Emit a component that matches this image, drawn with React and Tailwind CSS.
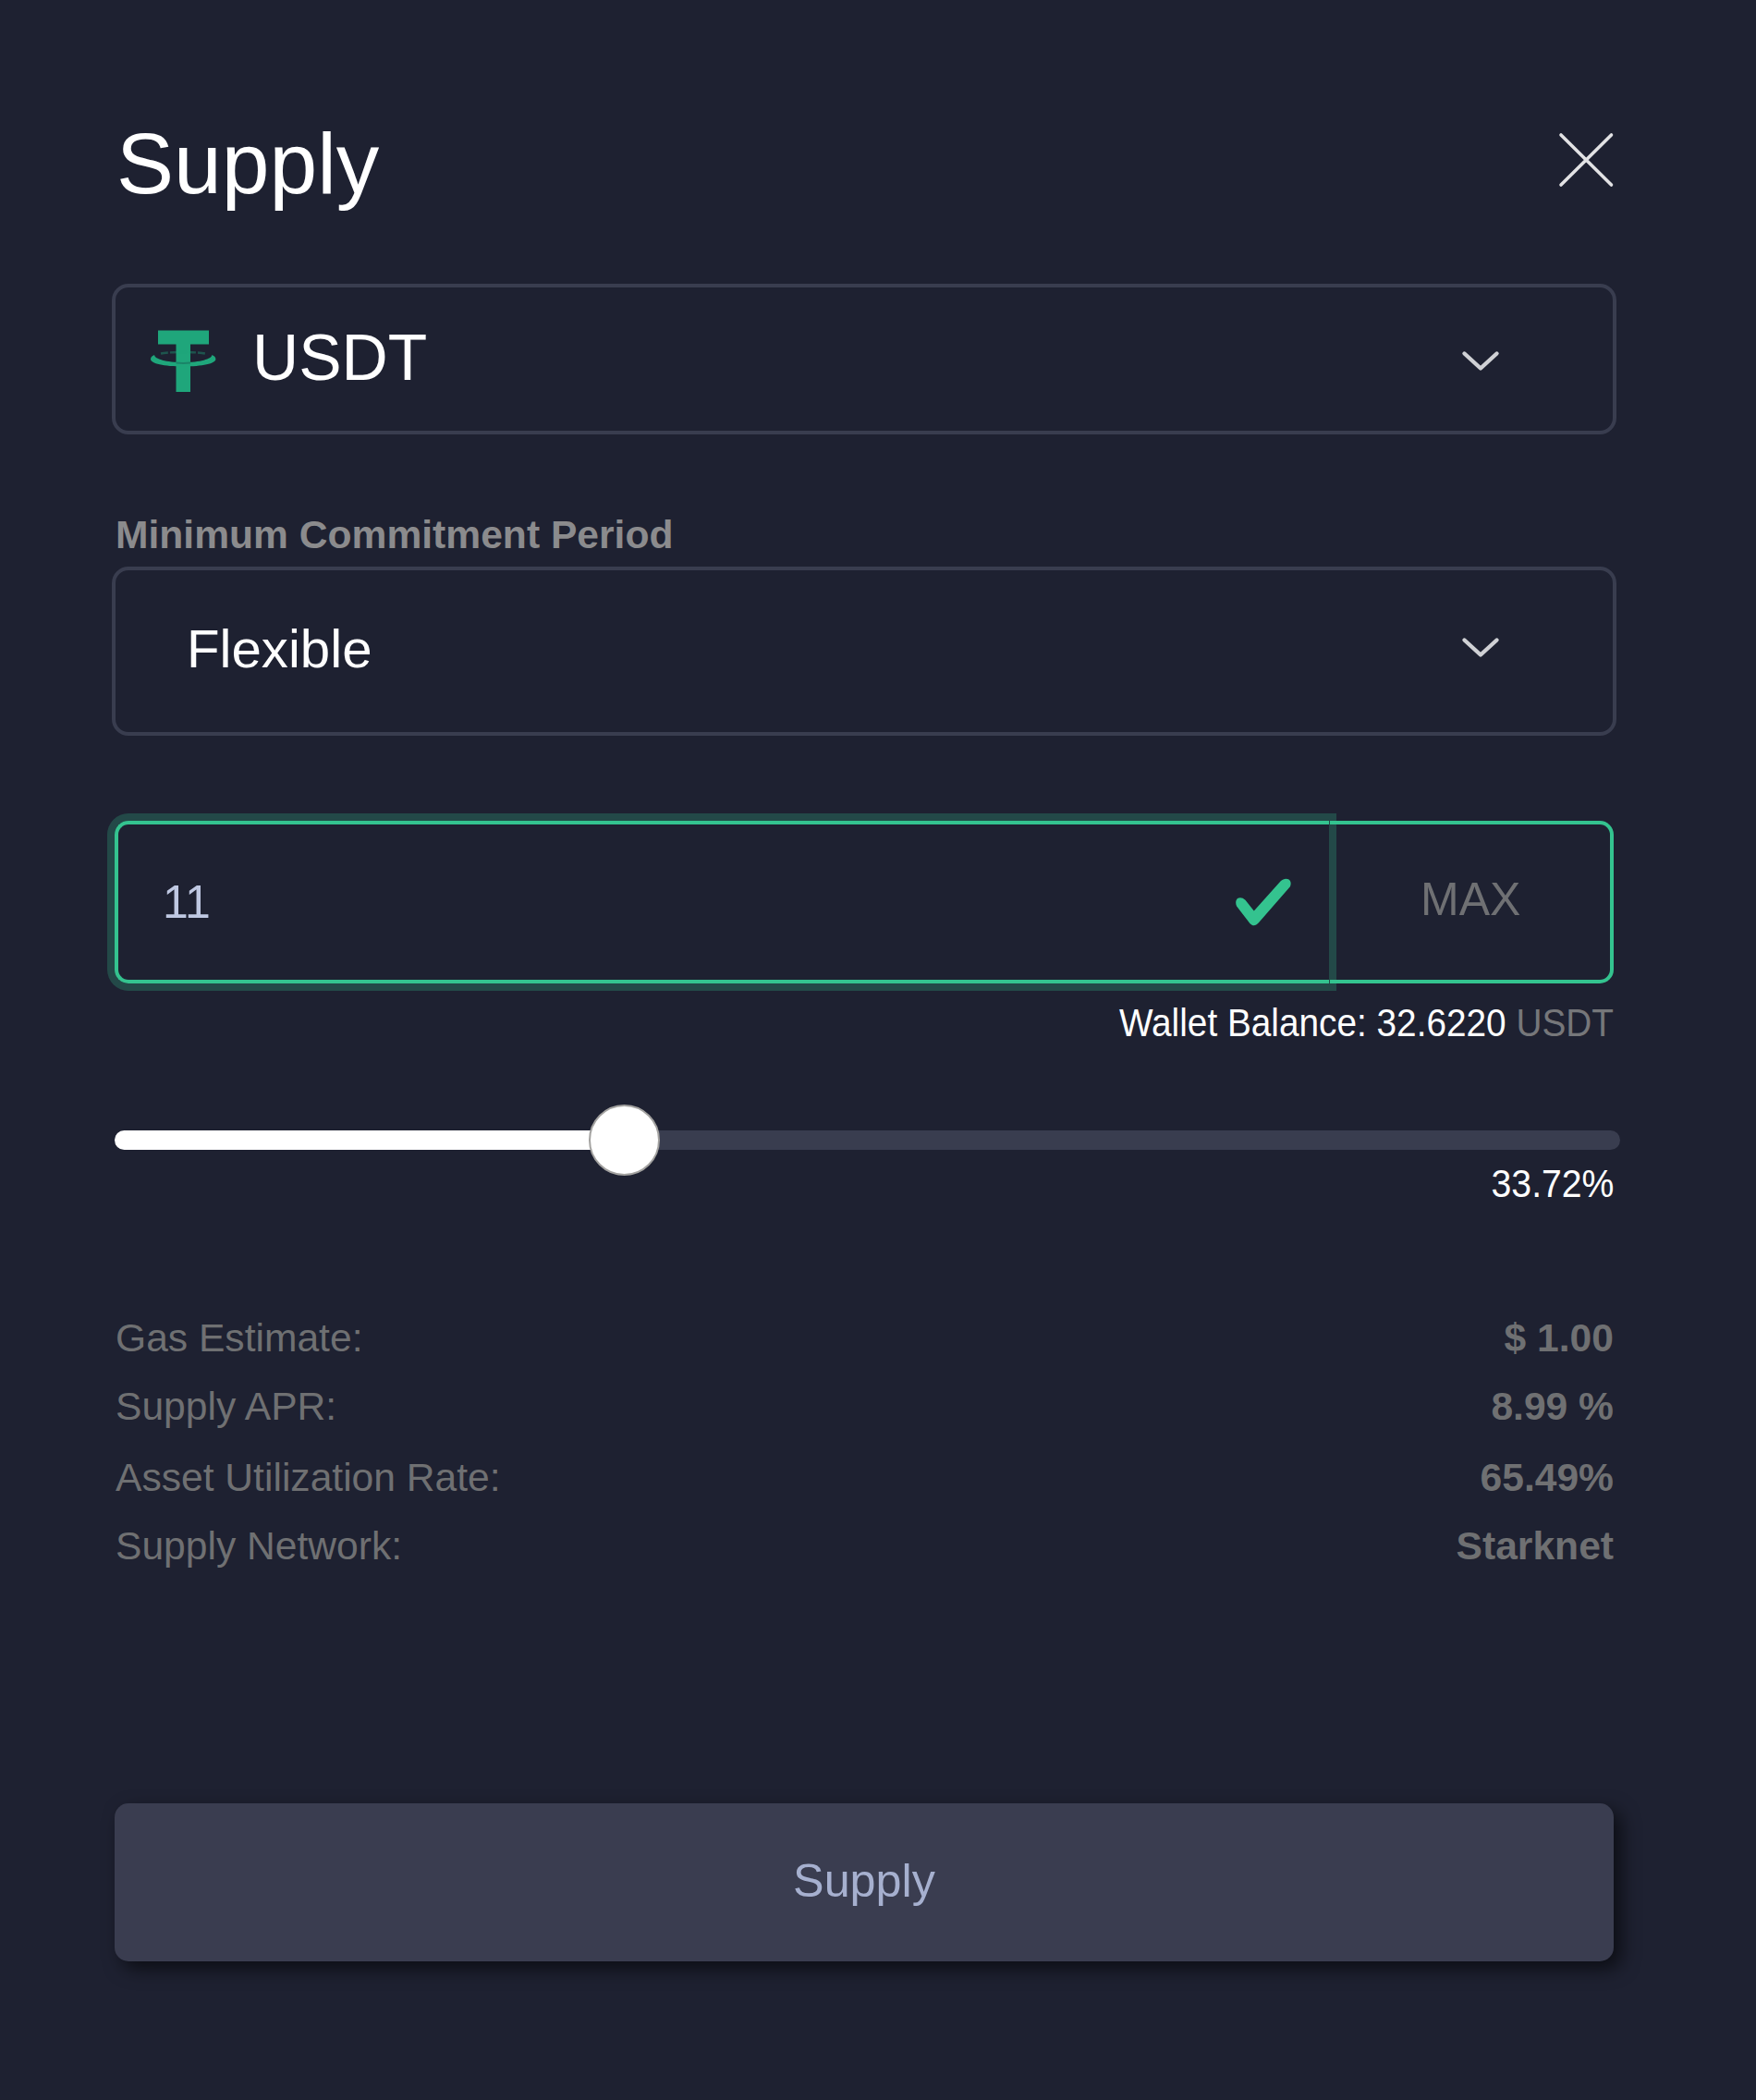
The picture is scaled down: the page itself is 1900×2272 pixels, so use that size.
import React from "react";

function CloseIcon() {
  return (
    <svg className="h-[62px] w-[62px]" viewBox="0 0 62 62" fill="none" stroke="#e2e2e4" strokeWidth="3.6" strokeLinecap="round">
      <path d="M4 4 58.500 58M58.500 4 4 58" />
    </svg>
  );
}

function ChevronIcon() {
  return (
    <svg className="h-[24px] w-[44px]" viewBox="0 0 44 24" fill="none" stroke="#d0d1d5" strokeWidth="4.4" strokeLinecap="round" strokeLinejoin="round">
      <path d="M4.500 4.500 22 20.500 39.500 4.500" />
    </svg>
  );
}

function TetherIcon() {
  return (
    <svg className="h-[72px] w-[74px]" viewBox="0 0 74 72" fill="none">
      <path d="M9 4.500h55v15H44v51.500H28.500V19.500H9z" fill="#1fa67b" />
      <path d="M12 29.500C22 27.500 50 27.500 60 29.500" stroke="#1fa67b" strokeWidth="2.4" strokeOpacity="0.4" strokeDasharray="8 2" />
      <path
        d="M5 31c-2.800 1.200-4 2.700-4 4.500 0 4.800 14.500 8 35.200 8s35.200-3.200 35.200-8c0-1.800-1.200-3.300-4-4.500-.6 4.500-12.500 8-31.200 8S5.600 35.500 5 31z"
        fill="#1fa67b"
      />
      <path d="M28.500 39.600q7.700.8 15.500 0" stroke="#1b8468" strokeWidth="2" />
    </svg>
  );
}

function CheckIcon() {
  return (
    <svg className="h-[68px] w-[68px]" viewBox="0 0 8 8" fill="#34c38f">
      <path d="M2.3 6.73.6 4.53c-.4-1.04.46-1.4 1.1-.8l1.1 1.4 3.4-3.8c.6-.63 1.6-.27 1.2.7l-4 4.6c-.43.5-.8.4-1.1.1z" />
    </svg>
  );
}

const details = [
  { label: "Gas Estimate:", value: "$ 1.00", row: "mb-[26px]" },
  { label: "Supply APR:", value: "8.99 %", row: "mb-[29px]" },
  { label: "Asset Utilization Rate:", value: "65.49%", row: "mb-[26px]" },
  { label: "Supply Network:", value: "Starknet", row: "" },
];

export default function App() {
  return (
    <main className="flex h-[2272px] w-[1900px] flex-col bg-[#1e2131] pt-[130px] pr-[151px] pl-[121px] font-['Liberation_Sans',Arial,sans-serif] text-white">
      <header className="flex h-[96px] items-start justify-between pr-[2px] pl-[5px]">
        <h1 className="-mt-px text-[93px] leading-[96px]">Supply</h1>
        <button className="mt-[12px]" aria-label="Close">
          <CloseIcon />
        </button>
      </header>

      <div className="mt-[81px] flex h-[163px] items-center rounded-[18px] border-4 border-[#393d4f] pr-[121px] pl-[37px]">
        <TetherIcon />
        <span className="-mt-[4px] ml-[37px] text-[69.500px] leading-[80px]">USDT</span>
        <span className="mt-[2px] ml-auto">
          <ChevronIcon />
        </span>
      </div>

      <label className="mt-[84px] pl-[4px] text-[42.600px] leading-[48px] font-bold text-[#8b8b8d]">
        Minimum Commitment Period
      </label>
      <div className="mt-[11px] flex h-[183px] items-center rounded-[18px] border-4 border-[#393d4f] pr-[121px] pl-[77px]">
        <span className="-mt-[6px] text-[58.200px] leading-[64px]">Flexible</span>
        <span className="-mt-[10px] ml-auto">
          <ChevronIcon />
        </span>
      </div>

      <div className="mt-[92px] mr-[3px] ml-[3px] flex h-[176px]">
        <div className="flex w-[1314px] items-center justify-between rounded-l-[15px] border-y-4 border-l-4 border-[#34c38f] pr-[37px] pl-[48px] shadow-[0_0_0_8px_rgba(52,195,143,0.25)]">
          <span className="text-[50px] leading-[56px] text-[#bfc8e2]">11</span>
          <CheckIcon />
        </div>
        <div className="relative ml-px flex flex-1 items-center rounded-r-[15px] border-y-4 border-r-4 border-[#34c38f] pl-[98px]">
          <span className="-mt-[7px] text-[50px] leading-[56px] text-[#6f7073]">MAX</span>
        </div>
      </div>

      <div className="mt-[18px] mr-[3px] flex justify-end">
        <p className="origin-right scale-x-[0.91] text-[42.600px] leading-[48px] whitespace-pre">
          Wallet Balance: 32.6220 <span className="text-[#76777a]">USDT</span>
        </p>
      </div>

      <div className="relative mt-[93px] mr-[-4px] ml-[3px] h-[21px] rounded-full bg-[#393d4f]">
        <div className="h-full w-[552px] rounded-l-full bg-white" />
        <div className="absolute top-[-28px] left-[513px] h-[77px] w-[77px] rounded-full border-2 border-[#a3a2a0] bg-white" />
      </div>

      <div className="mt-[12px] mr-[3px] flex justify-end">
        <span className="origin-right scale-x-[0.92] text-[42.600px] leading-[48px]">33.72%</span>
      </div>

      <dl className="mt-[119px] mr-[3px] ml-[4px] flex flex-col text-[42.600px] leading-[48px] text-[#6f7072]">
        {details.map((d) => (
          <div key={d.label} className={`flex justify-between ${d.row}`}>
            <dt>{d.label}</dt>
            <dd className="font-bold">{d.value}</dd>
          </div>
        ))}
      </dl>

      <button className="mt-[255px] mr-[3px] ml-[3px] h-[171px] shrink-0 rounded-[15px] bg-[#3a3d50] pb-[4px] text-[50.300px] leading-[56px] text-[#a6b0cf] shadow-[8px_8px_20px_rgba(0,0,0,0.6)]">
        Supply
      </button>
    </main>
  );
}
